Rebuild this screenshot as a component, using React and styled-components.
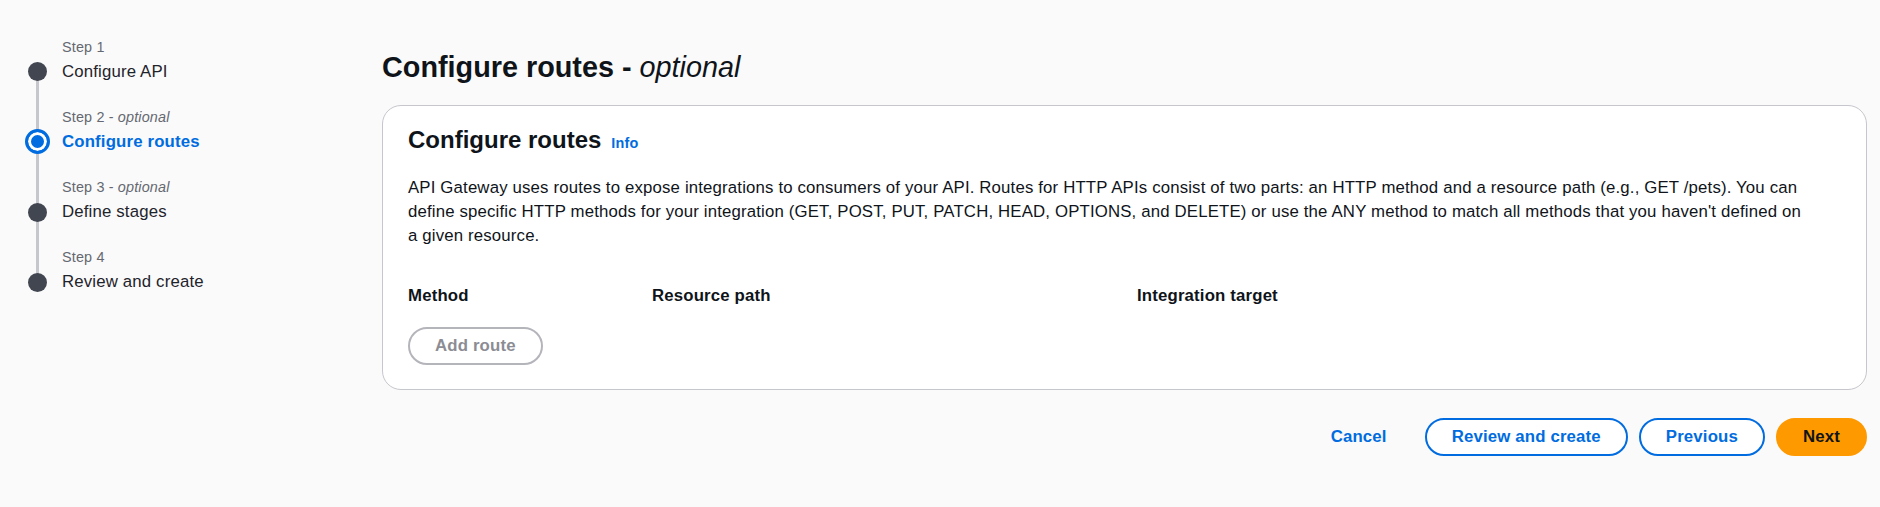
import React from "react";
import styled, { createGlobalStyle, css } from "styled-components";

const GlobalStyle = createGlobalStyle`
  html, body {
    margin: 0;
    padding: 0;
    background: #fafafa;
  }
  body {
    font-family: "Liberation Sans", Arial, sans-serif;
    letter-spacing: 0.01em;
    color: #0f141a;
  }
  * { box-sizing: border-box; }
`;

const Page = styled.div`
  display: flex;
  min-height: 507px;
`;

const Nav = styled.nav`
  width: 382px;
  flex-shrink: 0;
  padding: 38px 0 0 28px;
`;

const StepList = styled.ol`
  list-style: none;
  margin: 0;
  padding: 0;
`;

const Step = styled.li`
  position: relative;
  display: grid;
  grid-template-columns: 19px 1fr;
  column-gap: 15px;
  padding-bottom: 24.4px;

  &:not(:last-child)::before {
    content: "";
    position: absolute;
    left: 8px;
    top: 33.6px;
    width: 3px;
    height: 70px;
    background: #c6c6cd;
  }
`;

const Dot = styled.span`
  position: relative;
  z-index: 1;
  justify-self: center;
  border-radius: 50%;
  width: 19px;
  height: 19px;
  margin-top: 24.1px;
  background: #424650;

  ${(p) =>
    p.$active &&
    css`
      width: 25px;
      height: 25px;
      margin-top: 21.1px;
      background: #006ce0;
      border: 3px solid #006ce0;
      box-shadow: inset 0 0 0 3px #fff;
    `}
`;

const StepText = styled.div`
  display: flex;
  flex-direction: column;
  gap: 2.4px;
`;

const StepLabel = styled.span`
  font-size: 14.4px;
  line-height: 19.2px;
  color: #656871;

  i {
    font-style: italic;
  }
`;

const StepTitle = styled.span`
  font-size: 16.8px;
  line-height: 24px;
  color: ${(p) => (p.$active ? "#006ce0" : "#1f232b")};
  font-weight: ${(p) => (p.$active ? 700 : 400)};
`;

const Main = styled.main`
  flex: 1;
  padding: 49px 13px 0 0;
`;

const PageTitle = styled.h1`
  margin: 0 0 20px;
  font-size: 28.8px;
  line-height: 36px;
  font-weight: 700;
  letter-spacing: 0;
  color: #0f141a;

  i {
    font-weight: 400;
  }
`;

const Container = styled.section`
  background: #fff;
  border: 1px solid #c6c6cd;
  border-radius: 19px;
  padding: 20px 25px 24px;
`;

const ContainerHeader = styled.div`
  display: flex;
  align-items: baseline;
  gap: 10px;
`;

const SectionTitle = styled.h2`
  margin: 0;
  font-size: 24px;
  line-height: 28.8px;
  font-weight: 700;
  letter-spacing: 0;
`;

const InfoLink = styled.a`
  font-size: 14.4px;
  font-weight: 700;
  color: #006ce0;
  text-decoration: none;
`;

const Description = styled.p`
  margin: 21px 0 0;
  font-size: 16.8px;
  line-height: 24px;
  color: #0f141a;
`;

const ColumnHeaders = styled.div`
  display: grid;
  grid-template-columns: 244px 485px 1fr;
  margin-top: 36px;
`;

const ColumnHeader = styled.span`
  font-size: 16.8px;
  line-height: 24px;
  font-weight: 700;
`;

const Button = styled.button`
  height: 38px;
  padding: 0 25px;
  border-radius: 20px;
  font-family: inherit;
  font-size: 16.8px;
  letter-spacing: inherit;
  font-weight: 700;
  cursor: pointer;
  border: 2px solid #006ce0;
  background: #fff;
  color: #006ce0;

  ${(p) =>
    p.$variant === "link" &&
    css`
      border-color: transparent;
      background: transparent;
    `}

  ${(p) =>
    p.$variant === "primary" &&
    css`
      border-color: #ff9900;
      background: #ff9900;
      color: #0f141a;
    `}

  ${(p) =>
    p.$variant === "disabled" &&
    css`
      border-color: #b4b4bb;
      color: #8c8c94;
      cursor: default;
    `}
`;

const AddRoute = styled(Button)`
  margin-top: 19px;
`;

const Footer = styled.div`
  display: flex;
  justify-content: flex-end;
  gap: 11px;
  margin-top: 28px;
`;

const steps = [
  { label: "Step 1", title: "Configure API" },
  { label: "Step 2", optional: true, title: "Configure routes", active: true },
  { label: "Step 3", optional: true, title: "Define stages" },
  { label: "Step 4", title: "Review and create" },
];

// nbsp keeps "a given" together so the lines break as in the console
const description =
  "API Gateway uses routes to expose integrations to consumers of your API. Routes for HTTP APIs " +
  "consist of two parts: an HTTP method and a resource path (e.g., GET /pets). You can define " +
  "specific HTTP methods for your integration (GET, POST, PUT, PATCH, HEAD, OPTIONS, and DELETE) or " +
  "use the ANY method to match all methods that you haven't defined on a\u00A0given resource.";

export default function App() {
  return (
    <>
      <GlobalStyle />
      <Page>
        <Nav>
          <StepList>
            {steps.map((s) => (
              <Step key={s.label}>
                <Dot $active={s.active} />
                <StepText>
                  <StepLabel>
                    {s.label}
                    {s.optional && (
                      <>
                        {" - "}
                        <i>optional</i>
                      </>
                    )}
                  </StepLabel>
                  <StepTitle $active={s.active}>{s.title}</StepTitle>
                </StepText>
              </Step>
            ))}
          </StepList>
        </Nav>
        <Main>
          <PageTitle>
            Configure routes - <i>optional</i>
          </PageTitle>
          <Container>
            <ContainerHeader>
              <SectionTitle>Configure routes</SectionTitle>
              <InfoLink href="#">Info</InfoLink>
            </ContainerHeader>
            <Description>{description}</Description>
            <ColumnHeaders>
              <ColumnHeader>Method</ColumnHeader>
              <ColumnHeader>Resource path</ColumnHeader>
              <ColumnHeader>Integration target</ColumnHeader>
            </ColumnHeaders>
            <AddRoute $variant="disabled" disabled>
              Add route
            </AddRoute>
          </Container>
          <Footer>
            <Button $variant="link">Cancel</Button>
            <Button>Review and create</Button>
            <Button>Previous</Button>
            <Button $variant="primary">Next</Button>
          </Footer>
        </Main>
      </Page>
    </>
  );
}
